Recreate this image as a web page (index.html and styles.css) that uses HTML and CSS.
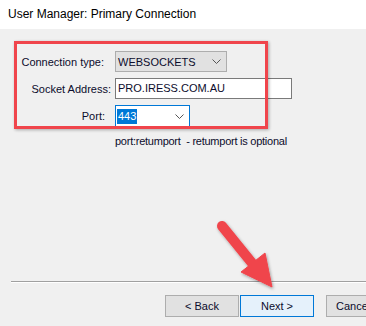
FILE: index.html
```html
<!DOCTYPE html>
<html>
<head>
<meta charset="utf-8">
<link rel="stylesheet" href="styles.css">
</head>
<body>
<div class="titlebar">User Manager: Primary Connection</div>
<div class="main">
  <div class="form">
    <label class="lbl lbl-conn">Connection type:</label>
    <div class="combo combo-conn">
      <span class="combo-text">WEBSOCKETS</span>
      <svg class="chev" width="9" height="5" viewBox="0 0 9 5"><polyline points="0.5,0.5 4.5,4.5 8.5,0.5" fill="none" stroke="#555" stroke-width="1"/></svg>
    </div>
    <label class="lbl lbl-sock">Socket Address:</label>
    <div class="textbox">PRO.IRESS.COM.AU</div>
    <label class="lbl lbl-port">Port:</label>
    <div class="combo combo-port">
      <span class="sel">443</span>
      <svg class="chev" width="9" height="5" viewBox="0 0 9 5"><polyline points="0.5,0.5 4.5,4.5 8.5,0.5" fill="none" stroke="#555" stroke-width="1"/></svg>
    </div>
    <span></span>
    <div class="hint">port:retumport&nbsp;&nbsp;- retumport is optional</div>
  </div>
</div>
<div class="separator"></div>
<div class="buttons">
  <button class="btn">&lt; Back</button>
  <button class="btn btn-default">Next &gt;</button>
  <button class="btn btn-cancel">Cancel</button>
</div>
<div class="highlight"></div>
<svg class="arrow" width="80" height="90" viewBox="205 210 80 90">
  <defs>
    <filter id="sh" x="-30%" y="-30%" width="160%" height="160%">
      <feDropShadow dx="1" dy="1.5" stdDeviation="1.5" flood-color="#000" flood-opacity="0.35"/>
    </filter>
  </defs>
  <g filter="url(#sh)" fill="#f0454c" stroke="#f0454c">
    <line x1="222" y1="226" x2="252" y2="263" stroke-width="10" stroke-linecap="round"/>
    <polygon points="241,272 265,253 272,287" stroke-width="1" stroke-linejoin="round"/>
  </g>
</svg>
</body>
</html>
```
FILE: styles.css
```css
html, body {
  margin: 0;
  padding: 0;
}
body {
  width: 366px;
  height: 326px;
  overflow: hidden;
  background: #f0f0f0;
  font-family: "Liberation Sans", Arial, sans-serif;
  font-size: 11px;
  color: #0c0c2c;
  display: flex;
  flex-direction: column;
  position: relative;
}
.titlebar {
  height: 29px;
  flex: none;
  background: #ffffff;
  color: #000;
  font-family: "Liberation Sans", Arial, sans-serif;
  font-size: 12px;
  line-height: 28px;
  padding-left: 8px;
  box-sizing: border-box;
}
.main {
  flex: 1;
}
.form {
  display: grid;
  grid-template-columns: 111px auto;
  grid-auto-rows: auto;
  column-gap: 4px;
  row-gap: 6px;
  padding-top: 22px;
  align-items: center;
  justify-items: start;
}
.lbl {
  justify-self: end;
  white-space: nowrap;
}
.lbl-conn { margin-right: 7px; }
.lbl-port { margin-right: 6px; }
.combo {
  box-sizing: border-box;
  height: 21px;
  display: flex;
  align-items: center;
  justify-content: space-between;
  padding: 0 5px 0 2px;
}
.combo-conn {
  width: 112px;
  background: #e1e1e1;
  border: 1px solid #adadad;
}
.combo-port {
  width: 75px;
  height: 22px;
  background: #fff;
  border: 1px solid #0078d7;
  padding-left: 1px;
}
.sel {
  background: #0078d7;
  color: #fff;
  line-height: 15px;
  padding: 0 1px;
}
.chev {
  display: block;
}
.textbox {
  box-sizing: border-box;
  width: 177px;
  height: 21px;
  background: #fff;
  border: 1px solid #7a7a7a;
  padding-left: 2px;
  line-height: 19px;
}
.hint {
  margin-top: 2px;
  white-space: pre;
  letter-spacing: -0.25px;
}
.separator {
  flex: none;
  margin-left: 11px;
  height: 0;
  border-top: 1px solid #a0a0a0;
  border-bottom: 1px solid #ffffff;
}
.buttons {
  flex: none;
  display: flex;
  padding: 12px 0 9px 165px;
}
.btn {
  flex: none;
  box-sizing: border-box;
  width: 74px;
  height: 22px;
  margin: 0;
  padding: 0;
  background: #e1e1e1;
  border: 1px solid #adadad;
  font-family: "Liberation Sans", Arial, sans-serif;
  font-size: 11px;
  color: #0c0c2c;
  text-align: center;
}
.btn-default {
  margin-left: 1px;
  background: #e5f1fb;
  border: 1px solid #0078d7;
}
.btn-cancel {
  margin-left: 12px;
  text-align: left;
  padding-left: 9px;
}
.highlight {
  position: absolute;
  left: 14px;
  top: 41px;
  width: 254px;
  height: 88px;
  box-sizing: border-box;
  border: 3px solid #f0454c;
  box-shadow: 1px 1px 3px rgba(0,0,0,0.3);
}
.arrow {
  position: absolute;
  left: 205px;
  top: 210px;
}
```
